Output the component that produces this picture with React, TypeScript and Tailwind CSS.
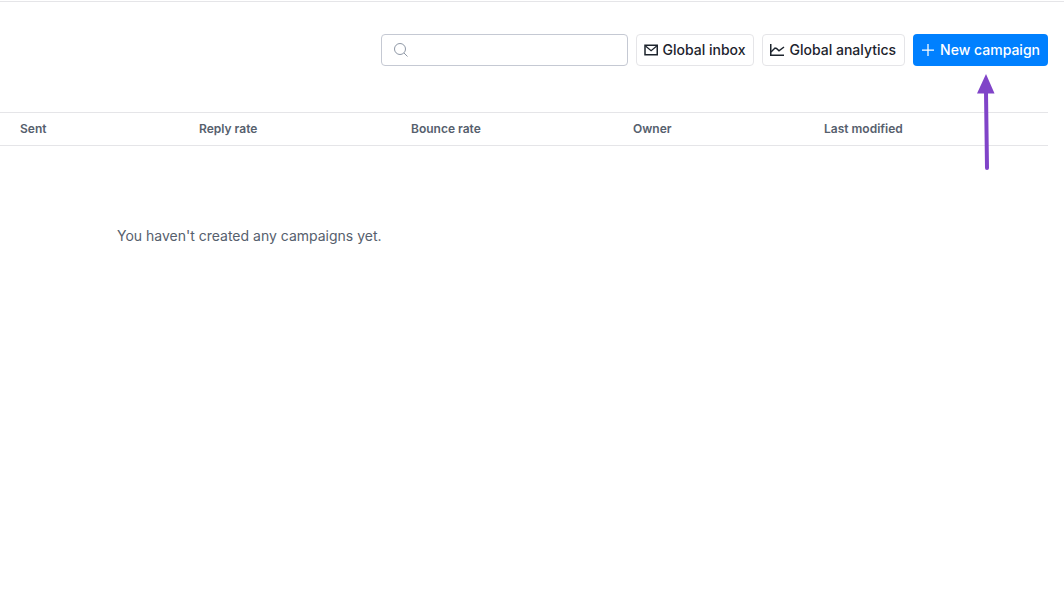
import React, { useState } from 'react';

const columns = [
  { label: 'Sent', width: 'w-[179px]' },
  { label: 'Reply rate', width: 'w-[212px]' },
  { label: 'Bounce rate', width: 'w-[222px]' },
  { label: 'Owner', width: 'w-[191px]' },
  { label: 'Last modified', width: '' },
];

const SearchIcon = () => (
  <svg className="w-4 h-4 shrink-0" viewBox="0 0 16 16" fill="none" stroke="#8f98a6" aria-hidden="true">
    <circle cx="7" cy="7" r="5.5" />
    <path d="M11 11l3.5 3.5" />
  </svg>
);

const MailIcon = () => (
  <svg className="w-4 h-4 shrink-0" viewBox="0 0 16 16" fill="none" stroke="#1d242d" strokeWidth="1.5" aria-hidden="true">
    <path d="M2 3.25h12.25v9.5H2z" />
    <path d="M2.5 4l5.6 4.75L13.75 4" strokeWidth="1.25" />
  </svg>
);

const ChartIcon = () => (
  <svg className="w-4 h-4 shrink-0" viewBox="0 0 16 16" fill="none" stroke="#1d242d" strokeWidth="1.5" aria-hidden="true">
    <path d="M.75 2v11.25H14" />
    <path d="M1 10l4-4 1.5.5 2.5 2.25L14 5" />
  </svg>
);

const PlusIcon = () => (
  <svg className="w-4 h-4 shrink-0" viewBox="0 0 16 16" fill="none" stroke="#fff" strokeWidth="1.25" aria-hidden="true">
    <path d="M8 2v12M2 8h12" />
  </svg>
);

const Arrow = () => (
  <svg className="absolute top-10 left-[63px] w-5 h-24 pointer-events-none" viewBox="0 0 20 96" aria-hidden="true">
    <path d="M10 18L11 94" stroke="#8044c8" strokeWidth="4" strokeLinecap="round" />
    <path d="M10 0l8.5 19.5H1z" fill="#8044c8" />
  </svg>
);

const Toolbar = () => {
  const [query, setQuery] = useState('');

  return (
    <div className="flex items-center justify-end gap-2 pr-4 pt-8">
      <label className="flex items-center h-8 w-[247px] px-[11px] border border-[#c5c9d3] rounded">
        <SearchIcon />
        <input
          type="text"
          aria-label="Search campaigns"
          className="flex-1 min-w-0 ml-2 text-sm outline-none"
          value={query}
          onChange={(e) => setQuery(e.target.value)}
        />
      </label>
      <button className="flex items-center gap-1 h-8 pl-1.5 pr-[7px] border border-[#e5e5e8] rounded text-sm font-medium text-[#1d242d] whitespace-nowrap">
        <MailIcon />
        Global inbox
      </button>
      <button className="flex items-center gap-1 h-8 pl-[7px] pr-2 border border-[#e5e5e8] rounded text-sm font-medium text-[#1d242d] whitespace-nowrap">
        <ChartIcon />
        Global analytics
      </button>
      <div className="relative">
        <button className="flex items-center gap-1 h-8 pl-[7px] pr-2 rounded bg-[#0080ff] text-sm font-medium text-white whitespace-nowrap">
          <PlusIcon />
          New campaign
        </button>
        <Arrow />
      </div>
    </div>
  );
};

const CampaignTable = () => (
  <div className="pr-4 mt-[46px]">
    <table className="w-full table-fixed text-left">
      <thead>
        <tr className="border-y border-[#e5e5e8]">
          {columns.map((c) => (
            <th key={c.label} className={`${c.width} h-[33px] p-0 pl-5 text-xs font-semibold text-[#56606d]`}>
              {c.label}
            </th>
          ))}
        </tr>
      </thead>
      <tbody>
        <tr>
          <td colSpan={columns.length} className="pt-20 pl-[117px] text-sm text-[#56606d]">
            You haven't created any campaigns yet.
          </td>
        </tr>
      </tbody>
    </table>
  </div>
);

export default function App() {
  return (
    <div className="min-h-screen bg-white pt-px font-['Inter',sans-serif]">
      <main className="border-t border-[#e5e5e8]">
        <Toolbar />
        <CampaignTable />
      </main>
    </div>
  );
}
